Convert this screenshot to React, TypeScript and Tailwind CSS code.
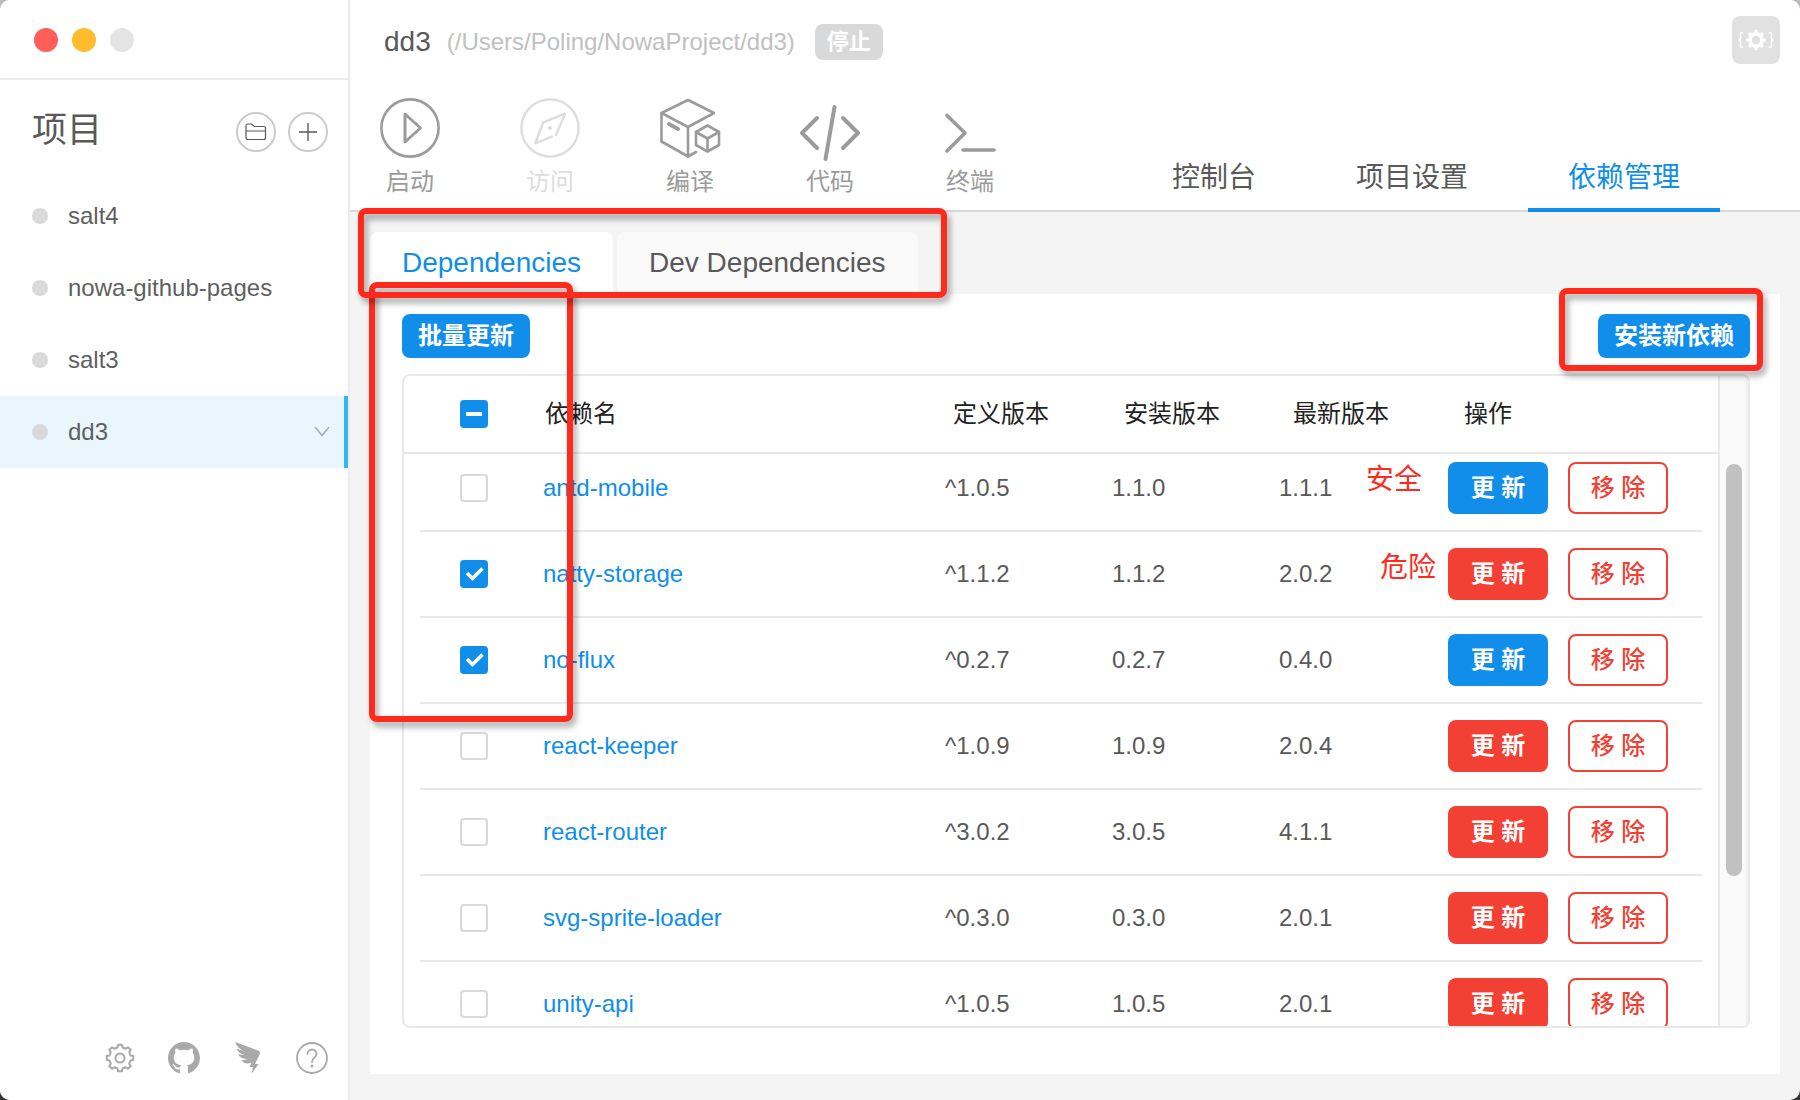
import React, { useEffect, useRef } from "react";

type Dep = {
  name: string;
  wanted: string;
  installed: string;
  latest: string;
  danger: boolean;
  checked: boolean;
  note?: string;
  noteClass?: string;
};

const deps: Dep[] = [
  { name: "antd-mobile", wanted: "^1.0.5", installed: "1.1.0", latest: "1.1.1", danger: false, checked: false, note: "安全", noteClass: "left-[103px] top-1.5" },
  { name: "natty-storage", wanted: "^1.1.2", installed: "1.1.2", latest: "2.0.2", danger: true, checked: true, note: "危险", noteClass: "left-[117px] top-4" },
  { name: "no-flux", wanted: "^0.2.7", installed: "0.2.7", latest: "0.4.0", danger: false, checked: true },
  { name: "react-keeper", wanted: "^1.0.9", installed: "1.0.9", latest: "2.0.4", danger: true, checked: false },
  { name: "react-router", wanted: "^3.0.2", installed: "3.0.5", latest: "4.1.1", danger: true, checked: false },
  { name: "svg-sprite-loader", wanted: "^0.3.0", installed: "0.3.0", latest: "2.0.1", danger: true, checked: false },
  { name: "unity-api", wanted: "^1.0.5", installed: "1.0.5", latest: "2.0.1", danger: true, checked: false },
];

const projects = ["salt4", "nowa-github-pages", "salt3", "dd3"];

function gearPath(c: number, teeth: number, outer: number, inner: number) {
  const step = (Math.PI * 2) / teeth;
  const pts: string[] = [];
  for (let i = 0; i < teeth; i++) {
    const a = i * step - Math.PI / 2;
    const corners: [number, number][] = [
      [-0.3, inner],
      [-0.19, outer],
      [0.19, outer],
      [0.3, inner],
    ];
    corners.forEach(([f, r]) => {
      pts.push(`${(c + r * Math.cos(a + f * step)).toFixed(2)} ${(c + r * Math.sin(a + f * step)).toFixed(2)}`);
    });
  }
  return `M${pts.join("L")}Z`;
}

function PlayIcon() {
  return (
    <svg width="60" height="60" viewBox="0 0 60 60" fill="none" stroke="currentColor" strokeWidth="2.6" strokeLinejoin="round">
      <circle cx="30" cy="30" r="28.6" />
      <path d="M25 16v28l15.5-14Z" strokeWidth="3" />
    </svg>
  );
}

function CompassIcon() {
  return (
    <svg width="60" height="60" viewBox="0 0 60 60" fill="none" stroke="currentColor" strokeWidth="2.4" strokeLinecap="round" strokeLinejoin="round">
      <circle cx="30" cy="30" r="28.6" />
      <path d="M31.7 38.7L15.3 45.3L23.3 24.3L45 15.7L36 37" />
      <circle cx="30" cy="30" r="2" fill="currentColor" stroke="none" />
    </svg>
  );
}

function BuildIcon() {
  return (
    <svg width="60" height="60" viewBox="0 0 60 60" fill="none" stroke="currentColor" strokeWidth="2.6" strokeLinecap="round" strokeLinejoin="round">
      <path d="M28 2L54 15L28 29L1.5 15Z" />
      <path d="M1.5 15V43.5L28 58.5V29" />
      <path d="M28 58.5L36 54" />
      <path d="M9 26l9 5" strokeWidth="4" />
      <path d="M47.500 27.500L59 34V47L47.500 53.500L36 47V34Z" />
      <path d="M36 34l11.500 6.500L59 34M47.500 40.500V53" />
    </svg>
  );
}

function CodeIcon() {
  return (
    <svg width="60" height="60" viewBox="0 0 60 60" fill="none" stroke="currentColor" strokeWidth="4" strokeLinecap="round" strokeLinejoin="round">
      <path d="M17 20L2 35L17 50M43 20L58 35L43 50M34.500 9L25.500 61" />
    </svg>
  );
}

function TerminalIcon() {
  return (
    <svg width="60" height="60" viewBox="0 0 60 60" fill="none" stroke="currentColor" strokeWidth="3.600" strokeLinecap="round" strokeLinejoin="round">
      <path d="M7 17.500L25 35L7 53M23 52H54" />
    </svg>
  );
}

const tools = [
  { label: "启动", icon: <PlayIcon />, disabled: false },
  { label: "访问", icon: <CompassIcon />, disabled: true },
  { label: "编译", icon: <BuildIcon />, disabled: false },
  { label: "代码", icon: <CodeIcon />, disabled: false },
  { label: "终端", icon: <TerminalIcon />, disabled: false },
];

function Check({ label, checked, partial }: { label: string; checked?: boolean; partial?: boolean }) {
  const ref = useRef<HTMLInputElement>(null);
  useEffect(() => {
    if (ref.current) ref.current.indeterminate = !!partial;
  }, [partial]);
  return (
    <label className="relative mx-auto block size-7">
      <input
        ref={ref}
        type="checkbox"
        aria-label={label}
        defaultChecked={checked}
        className="peer block size-7 appearance-none rounded-sm border-2 border-[#d9d9d9] bg-white checked:border-[#108ee9] checked:bg-[#108ee9] indeterminate:border-[#108ee9] indeterminate:bg-[#108ee9]"
      />
      <svg viewBox="0 0 28 28" className="pointer-events-none absolute inset-0 hidden size-7 peer-checked:block" fill="none" stroke="#fff" strokeWidth="3.600">
        <path d="M7 13L12.500 18.500L22.500 8.500" />
      </svg>
      <span className="pointer-events-none absolute top-3 left-1.5 hidden h-1 w-4 bg-white peer-indeterminate:block" />
    </label>
  );
}

function Sidebar() {
  return (
    <aside className="flex w-[350px] shrink-0 flex-col border-r-2 border-[#ececec] bg-white">
      <div className="flex h-20 shrink-0 items-center gap-3.5 border-b-2 border-[#ececec] pt-0.5 pl-[34px]">
        <button aria-label="关闭" className="size-6 rounded-full bg-[#ff5f57]" />
        <button aria-label="最小化" className="size-6 rounded-full bg-[#ffbd2e]" />
        <button aria-label="缩放" className="size-6 rounded-full bg-[#e4e4e4]" />
      </div>
      <div className="flex h-[100px] shrink-0 items-center gap-3 pr-5 pl-8">
        <h1 className="flex-1 text-[35px] leading-10 text-[#595959]">项目</h1>
        <div className="flex gap-3 pt-1">
          <button aria-label="打开项目" className="flex size-10 items-center justify-center rounded-full border-2 border-[#ccc] text-[#595959]">
            <svg width="22" height="18" viewBox="0 0 22 18" fill="none" stroke="currentColor" strokeWidth="1.200">
              <path d="M1 8V2.500Q1 1 2.500 1H6.500L9.500 3.500H18.500Q20.500 3.500 20.500 5.500V8M1 8H20.500V14.500Q20.500 16.500 18.500 16.500H3Q1 16.500 1 14.500Z" />
            </svg>
          </button>
          <button aria-label="新建项目" className="flex size-10 items-center justify-center rounded-full border-2 border-[#ccc] text-[#595959]">
            <svg width="18" height="18" viewBox="0 0 18 18" stroke="currentColor" strokeWidth="1.400">
              <path d="M9 0V18M0 9H18" />
            </svg>
          </button>
        </div>
      </div>
      <nav className="flex-1">
        {projects.map((p) => (
          <a
            key={p}
            href="#"
            className={
              p === "dd3"
                ? "flex h-[72px] items-center gap-5 border-r-4 border-[#2db7f5] bg-[#e9f6fe] pr-3.5 pl-8"
                : "flex h-[72px] items-center gap-5 pr-3.5 pl-8"
            }
          >
            <span className="size-4 rounded-full bg-[#d9d9d9]" />
            <span className="flex-1 text-2xl text-[#5f5f5f]">{p}</span>
            {p === "dd3" && (
              <svg width="16" height="10" viewBox="0 0 16 10" fill="none" stroke="#aaa" strokeWidth="1.500">
                <path d="M1 0L8 8.500L15 0" />
              </svg>
            )}
          </a>
        ))}
      </nav>
      <div className="flex h-[84px] shrink-0 items-center justify-end gap-8 pr-5 text-[#a9a9a9]">
        <button aria-label="设置">
          <svg width="32" height="32" viewBox="0 0 32 32" fill="none" stroke="currentColor" strokeWidth="2" strokeLinejoin="round">
            <path d={gearPath(16, 8, 13.4, 10.8)} />
            <circle cx="16" cy="16" r="4.500" />
          </svg>
        </button>
        <button aria-label="GitHub">
          <svg width="32" height="32" viewBox="0 0 16 16" fill="currentColor">
            <path d="M8 0C3.580 0 0 3.580 0 8c0 3.540 2.290 6.530 5.470 7.590.4.070.55-.17.55-.38 0-.19-.01-.82-.01-1.490-2.010.37-2.530-.49-2.690-.94-.09-.23-.48-.94-.82-1.130-.28-.15-.68-.52-.01-.53.630-.01 1.080.580 1.230.820.720 1.210 1.870.870 2.330.660.070-.52.280-.87.510-1.070-1.780-.2-3.640-.89-3.640-3.950 0-.87.310-1.590.820-2.150-.08-.2-.36-1.020.080-2.120 0 0 .67-.21 2.200.82.640-.18 1.320-.27 2-.27s1.360.09 2 .27c1.530-1.040 2.200-.82 2.200-.82.440 1.100.160 1.920.080 2.120.510.560.820 1.270.820 2.150 0 3.070-1.870 3.750-3.650 3.950.290.250.540.730.540 1.480 0 1.070-.01 1.930-.01 2.200 0 .21.150.46.550.38A8.010 8.010 0 0 0 16 8c0-4.420-3.580-8-8-8Z" />
          </svg>
        </button>
        <button aria-label="钉钉">
          <svg width="32" height="32" viewBox="0 0 32 32" fill="currentColor">
            <path d="M3.300 0L26 8.500Q28.500 9.500 27.800 12L23 22H26.500L19.500 32L21 25H17.500L19.500 20.500Q13 23 9.500 18.500L16 17Q8 17 6 12.200L13.500 13.200Q6 11.500 4.600 6.500L13 9.800Q4.500 6 3.300 0Z" />
          </svg>
        </button>
        <button aria-label="帮助">
          <svg width="32" height="32" viewBox="0 0 32 32" fill="none" stroke="currentColor" strokeWidth="1.800">
            <circle cx="16" cy="16" r="15" />
            <path d="M11.500 12a4.500 4.500 0 0 1 9 0c0 3.500-4.500 4-4.500 8" strokeLinecap="round" />
            <circle cx="16" cy="24.200" r="1.400" fill="currentColor" stroke="none" />
          </svg>
        </button>
      </div>
    </aside>
  );
}

function Header() {
  return (
    <header className="flex h-[212px] shrink-0 flex-col justify-between border-b-2 border-[#d9d9d9] bg-white">
      <div className="flex items-start pt-4 pr-5 pl-[34px]">
        <div className="flex h-[52px] flex-1 items-center">
          <h2 className="text-[28px] text-[#595959]">dd3</h2>
          <span className="ml-4 text-2xl text-[#c0c0c0]">(/Users/Poling/NowaProject/dd3)</span>
          <button disabled className="ml-5 h-9 w-[68px] rounded-lg bg-[#d9d9d9] text-[22px] leading-9 font-bold text-white">
            停止
          </button>
        </div>
        <button aria-label="环境设置" className="flex size-12 items-center justify-center rounded-lg bg-[#e1e1e1] text-white">
          <svg width="38" height="24" viewBox="0 0 38 24" fill="none" stroke="currentColor">
            <path d={gearPath(12, 8, 10, 8)} transform="translate(7 0)" fill="currentColor" stroke="none" />
            <circle cx="19" cy="12" r="4.200" fill="#e1e1e1" stroke="none" />
            <path d="M6 4.500Q3.500 4.500 3.500 7V9.500Q3.500 12 1.500 12Q3.500 12 3.500 14.500V17Q3.500 19.500 6 19.500M32 4.500Q34.500 4.500 34.500 7V9.500Q34.500 12 36.500 12Q34.500 12 34.500 14.500V17Q34.500 19.500 32 19.500" strokeWidth="1.600" />
          </svg>
        </button>
      </div>
      <div className="-mb-0.5 flex items-end pr-20">
        <div className="flex flex-1 pb-3.5">
          {tools.map((t) => (
            <button
              key={t.label}
              disabled={t.disabled}
              className={
                t.disabled
                  ? "mr-5 flex w-[120px] flex-col items-center gap-2 text-[#ddd]"
                  : "mr-5 flex w-[120px] flex-col items-center gap-2 text-[#9b9b9b]"
              }
            >
              <span className="overflow-visible [&>svg]:overflow-visible">{t.icon}</span>
              <span className="text-2xl leading-8">{t.label}</span>
            </button>
          ))}
        </div>
        <nav className="flex gap-5 text-[28px] leading-[60px]">
          <a href="#" className="border-b-4 border-transparent px-10 text-[#595959]">控制台</a>
          <a href="#" className="border-b-4 border-transparent px-10 text-[#595959]">项目设置</a>
          <a href="#" className="border-b-4 border-[#108ee9] px-10 text-[#108ee9]">依赖管理</a>
        </nav>
      </div>
    </header>
  );
}

function DepsTable() {
  return (
    <div className="flex min-h-0 flex-1 overflow-hidden rounded-lg border-2 border-[#e9e9e9]">
      <div className="min-w-0 flex-1 overflow-hidden">
        <table className="w-full table-fixed border-separate border-spacing-0 text-left text-2xl text-[#595959]">
          <colgroup>
            <col className="w-4" />
            <col className="w-[107px]" />
            <col />
            <col className="w-[167px]" />
            <col className="w-[167px]" />
            <col className="w-[169px]" />
            <col className="w-[270px]" />
            <col className="w-4" />
          </colgroup>
          <thead>
            <tr className="text-[#222] [&>*]:h-[78px] [&>*]:border-b-2 [&>*]:border-[#e9e9e9] [&>*]:font-normal">
              <td />
              <th scope="col"><Check label="全选" partial /></th>
              <th scope="col" className="pl-[18px]">依赖名</th>
              <th scope="col" className="pl-6">定义版本</th>
              <th scope="col" className="pl-7">安装版本</th>
              <th scope="col" className="pl-[30px]">最新版本</th>
              <th scope="col" className="pl-8">操作</th>
              <td />
            </tr>
          </thead>
          <tbody>
            {deps.map((d, i) => (
              <tr
                key={d.name}
                className={
                  i === 0
                    ? "[&>td]:border-[#e9e9e9] [&>td]:pt-2 [&>td]:pb-4"
                    : "[&>td]:border-[#e9e9e9] [&>td]:pt-4 [&>td]:pb-4"
                }
              >
                <td />
                <td className="border-b-2"><Check label={d.name} checked={d.checked} /></td>
                <td className="border-b-2 pl-4"><a href="#" className="text-[#108ee9]">{d.name}</a></td>
                <td className="border-b-2 pl-4">{d.wanted}</td>
                <td className="border-b-2 pl-4">{d.installed}</td>
                <td className="relative border-b-2 pl-4">
                  {d.latest}
                  {d.note && <span className={"absolute text-[28px] leading-10 whitespace-nowrap text-[#ff2a1c] " + d.noteClass}>{d.note}</span>}
                </td>
                <td className="border-b-2 pl-4">
                  <div className="flex gap-5">
                    <button
                      className={
                        d.danger
                          ? "h-[52px] w-[100px] rounded-lg bg-[#f24034] font-bold text-white"
                          : "h-[52px] w-[100px] rounded-lg bg-[#108ee9] font-bold text-white"
                      }
                    >
                      更 新
                    </button>
                    <button className="h-[52px] w-[100px] rounded-lg border-2 border-[#f24034] bg-white font-medium text-[#f24034]">移 除</button>
                  </div>
                </td>
                <td />
              </tr>
            ))}
          </tbody>
        </table>
      </div>
      <div className="w-[30px] shrink-0 border-x-2 border-l-[#e9e9e9] border-r-[#f0f0f0] bg-[#fafafa] px-1.5 pt-[88px]">
        <div className="h-[412px] w-4 rounded-full bg-[#c1c1c1]" />
      </div>
    </div>
  );
}

export default function App() {
  return (
    <div className="h-screen bg-linear-to-b from-[#bbb] to-[#333] font-['Liberation_Sans','Noto_Sans_CJK_SC',sans-serif]">
      <div className="relative flex h-full overflow-hidden rounded-[10px] bg-[#f4f4f4]">
        <Sidebar />
        <main className="flex min-w-0 flex-1 flex-col">
          <Header />
          <div className="flex min-h-0 flex-1 flex-col px-5 pt-5 pb-[26px]">
            <div role="tablist" className="flex shrink-0 gap-1 text-[28px] leading-[62px]">
              <button role="tab" aria-selected="true" className="rounded-t-lg bg-white px-8 text-[#108ee9]">Dependencies</button>
              <button role="tab" aria-selected="false" className="rounded-t-lg bg-[#f9f9f9] px-8 text-[#595959]">Dev Dependencies</button>
            </div>
            <section className="flex min-h-0 flex-1 flex-col gap-4 bg-white pt-5 pr-[30px] pb-[46px] pl-8">
              <div className="flex shrink-0 justify-between">
                <button className="h-11 rounded-lg bg-[#108ee9] px-4 text-2xl font-bold text-white">批量更新</button>
                <button className="h-11 rounded-lg bg-[#108ee9] px-4 text-2xl font-bold text-white">安装新依赖</button>
              </div>
              <DepsTable />
            </section>
          </div>
        </main>
        <div className="pointer-events-none absolute top-[282px] left-[369px] h-[440px] w-[204px] rounded-lg border-6 border-[#ff2a1c] drop-shadow-[3px_5px_3px_rgba(0,0,0,0.35)]" />
        <div className="pointer-events-none absolute top-[208px] left-[358px] h-[90px] w-[589px] rounded-lg border-6 border-[#ff2a1c] drop-shadow-[3px_5px_3px_rgba(0,0,0,0.35)]" />
        <div className="pointer-events-none absolute top-[288px] right-[37px] h-[83px] w-[204px] rounded-lg border-6 border-[#ff2a1c] drop-shadow-[3px_5px_3px_rgba(0,0,0,0.35)]" />
      </div>
    </div>
  );
}
